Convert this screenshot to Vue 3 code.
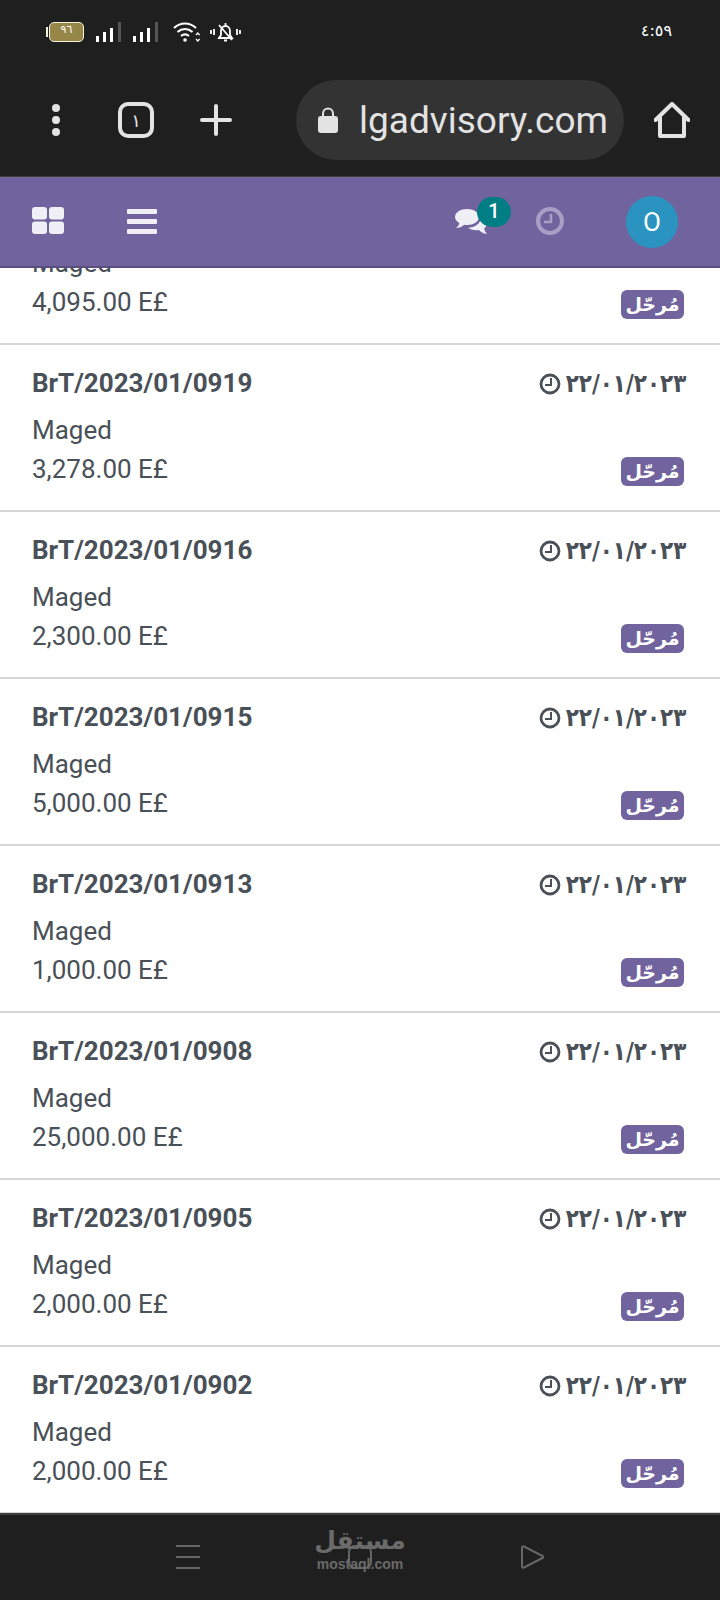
<template>
  <div class="phone">
    <header class="chrome">
      <div class="status">
        <div class="status-left">
          <span class="battery-nub"></span>
          <span class="battery"><span class="battery-num">٩٦</span></span>
          <svg class="signal" width="26" height="20" viewBox="0 0 26 20"><path d="M0 14h3v6H0zM7 10h3v10H7zM14 6h3v14h-3z" fill="#fff" /><path d="M22 0h3v20h-3z" fill="#555" /></svg>
          <svg class="signal" width="26" height="20" viewBox="0 0 26 20"><path d="M0 14h3v6H0zM7 10h3v10H7zM14 6h3v14h-3z" fill="#fff" /><path d="M22 0h3v20h-3z" fill="#555" /></svg>
          <svg class="wifi" width="27" height="21" viewBox="0 0 27 21" fill="none" stroke="#fff" stroke-width="2.2"><path d="M1 6c6.500-6 15.500-6 22 0" /><path d="M4.500 10c4.500-4 10.500-4 15 0" /><path d="M8 14c2.500-2 5.500-2 8 0" /><circle cx="12" cy="18" r="1.800" fill="#fff" stroke="none" /><path d="M23 13l1.800-2 1.800 2M23 17l1.800 2 1.800-2" stroke-width="1.300" /></svg>
          <svg class="bell" width="31" height="21" viewBox="0 0 31 21" fill="none" stroke="#fff" stroke-width="1.800"><path d="M9 16h13l-2-3V9c0-3-2-5-4.500-5S11 6 11 9v4z" /><path d="M14 18.500h3M15.500 1v3M9 3l13 15" /><path d="M1 8v4M4 7v6M27 7v6M30 8v4" /></svg>
        </div>
        <span class="time">٤:٥٩</span>
      </div>

      <div class="browser">
        <span class="dots"><i></i><i></i><i></i></span>
        <span class="tabs">١</span>
        <svg class="plus" width="32" height="32" viewBox="0 0 32 32"><path d="M16 2v28M2 16h28" stroke="#e3e3e3" stroke-width="4" stroke-linecap="round" /></svg>
        <div class="url">
          <svg width="20" height="26" viewBox="0 0 20 26"><path d="M5 10V6.500a5 5 0 0 1 10 0V10" fill="none" stroke="#e3e3e3" stroke-width="2" /><rect x="0" y="9" width="20" height="17" rx="3" fill="#e3e3e3" /></svg>
          <span class="url-text">lgadvisory.com</span>
        </div>
        <svg class="home" width="36" height="36" viewBox="0 0 36 36" fill="none" stroke="#e3e3e3" stroke-width="4" stroke-linejoin="round"><path d="M1.500 18L18 2l16.500 16" stroke-linecap="round" /><path d="M6 15v19h24V15" /></svg>
      </div>
    </header>

    <nav class="navbar">
      <svg class="apps" width="32" height="27" viewBox="0 0 32 27" fill="#f1eff6"><rect width="15" height="12.500" rx="3" /><rect x="17" width="15" height="12.500" rx="3" /><rect y="14.500" width="15" height="12.500" rx="3" /><rect x="17" y="14.500" width="15" height="12.500" rx="3" /></svg>
      <span class="bars"><i></i><i></i><i></i></span>
      <div class="nav-right">
        <span class="chat">
          <svg width="32" height="26" viewBox="0 0 32 26" fill="#f1eff6"><path d="M12 0c6.600 0 12 3.400 12 8s-5.400 8-12 8c-1 0-2 0-3-.3C7 18 4 19 1 19c2-1.500 3-3 3.300-5C1.600 12.500 0 10.400 0 8c0-4.600 5.400-8 12-8z" /><path d="M26 8c3.500 1 6 3.500 6 6.500 0 2-1 3.600-2.800 4.800.2 2 1.200 4 2.800 5.700-3.500-.3-6-2-8-4-1 .2-2 .3-3 .3-3 0-6-1-8-2.500 7 0 13-4.500 13-10.800z" /></svg>
          <span class="chat-count">1</span>
        </span>
        <svg class="activity" width="28" height="28" viewBox="0 0 28 28" fill="none" stroke="#a99fc6"><circle cx="14" cy="14" r="12" stroke-width="4" /><path d="M15 7v8H8" stroke-width="2.500" /></svg>
        <span class="avatar">O</span>
      </div>
    </nav>

    <main class="list">
      <!-- first row is scrolled under the navbar, only its lower part shows -->
      <article class="row row-cut">
        <div class="row-left">
          <div class="row-name">Maged</div>
          <div class="row-amount">4,095.00 E£</div>
        </div>
        <span class="badge">مُرحّل</span>
      </article>
      <article v-for="row in rows" :key="row.id" class="row">
        <div class="row-left">
          <div class="row-title">{{ row.id }}</div>
          <div class="row-name">Maged</div>
          <div class="row-amount">{{ row.amount }} E£</div>
        </div>
        <div class="row-right">
          <div class="row-date">
            <svg width="22" height="22" viewBox="0 0 22 22" fill="none" stroke="#495057"><circle cx="11" cy="11" r="9" stroke-width="2.800" /><path d="M12 5v7H6" stroke-width="2" /></svg>
            <span class="date-text">٢٢/٠١/٢٠٢٣</span>
          </div>
          <span class="badge">مُرحّل</span>
        </div>
      </article>
    </main>

    <footer class="softkeys">
      <svg width="24" height="24" viewBox="0 0 24 24" stroke="#666" stroke-width="2"><path d="M0 1h24M0 12h24M0 23h24" /></svg>
      <svg width="24" height="24" viewBox="0 0 24 24" fill="none" stroke="#666" stroke-width="2"><rect x="1" y="1" width="22" height="22" rx="6" /></svg>
      <svg width="24" height="24" viewBox="0 0 24 24" fill="none" stroke="#666" stroke-width="2" stroke-linejoin="round"><path d="M2 2.500c0-1 1-1.500 2-1L22.500 11c1 .5 1 1.500 0 2L4 22.500c-1 .5-2 0-2-1z" /></svg>
      <div class="watermark">
        <span class="wm-ar">مستقل</span>
        <span class="wm-en">mostaql.com</span>
      </div>
    </footer>
  </div>
</template>

<script setup>
const rows = [
  { id: 'BrT/2023/01/0919', amount: '3,278.00' },
  { id: 'BrT/2023/01/0916', amount: '2,300.00' },
  { id: 'BrT/2023/01/0915', amount: '5,000.00' },
  { id: 'BrT/2023/01/0913', amount: '1,000.00' },
  { id: 'BrT/2023/01/0908', amount: '25,000.00' },
  { id: 'BrT/2023/01/0905', amount: '2,000.00' },
  { id: 'BrT/2023/01/0902', amount: '2,000.00' }
]
</script>

<style>
html, body {
  margin: 0;
  background: #fff;
}
</style>

<style scoped>
.phone {
  width: 720px;
  height: 1600px;
  display: flex;
  flex-direction: column;
  overflow: hidden;
  font-family: Roboto, "DejaVu Sans", sans-serif;
}

.chrome {
  height: 176px;
  flex: none;
  background: #1f1f1f;
  border-bottom: 1px solid #3d3d3d;
}

.status {
  height: 80px;
  display: flex;
  justify-content: space-between;
  padding: 22px 48px 0 46px;
  box-sizing: border-box;
}
.status-left {
  display: flex;
  align-items: flex-start;
}
.battery-nub {
  width: 2px;
  height: 10px;
  margin: 5px 1px 0 0;
  background: #f4f0e0;
}
.battery {
  width: 35px;
  height: 20px;
  box-sizing: border-box;
  border: 1.5px solid #f4f0e0;
  border-radius: 5px;
  background: #968748;
  display: flex;
  justify-content: center;
  margin-right: 12px;
}
.battery-num {
  color: #fff;
  font-size: 11px;
  line-height: 14px;
  font-family: "DejaVu Sans", sans-serif;
}
.signal {
  margin-right: 11px;
}
.signal + .wifi {
  margin-left: 3px;
  margin-right: 10px;
}
.time {
  color: #fff;
  font-size: 16px;
  line-height: 18px;
  font-family: "DejaVu Sans", sans-serif;
  direction: ltr;
}

.browser {
  height: 80px;
  display: flex;
  align-items: center;
  padding-left: 52px;
}
.dots {
  width: 8px;
  display: flex;
  flex-direction: column;
  gap: 4px;
}
.dots i {
  width: 8px;
  height: 8px;
  border-radius: 50%;
  background: #e3e3e3;
}
.tabs {
  width: 36px;
  height: 36px;
  box-sizing: border-box;
  margin-left: 58px;
  border: 4px solid #e3e3e3;
  border-radius: 10px;
  color: #e3e3e3;
  font-size: 18px;
  display: flex;
  align-items: center;
  justify-content: center;
  font-family: "DejaVu Sans", sans-serif;
}
.plus {
  margin-left: 46px;
}
.url {
  width: 328px;
  height: 80px;
  margin-left: 64px;
  border-radius: 40px;
  background: #333;
  display: flex;
  align-items: center;
  padding-left: 22px;
  box-sizing: border-box;
}
.url-text {
  margin-left: 21px;
  color: #e3e3e3;
  font-size: 37px;
}
.home {
  margin-left: 30px;
}

.navbar {
  height: 91px;
  flex: none;
  box-sizing: border-box;
  background: #71639e;
  border-bottom: 2px solid #5b4f80;
  display: flex;
  align-items: center;
  padding: 0 42px 0 32px;
}
.apps {
  margin-top: -2px;
}
.bars {
  margin-left: 63px;
  width: 30px;
  display: flex;
  flex-direction: column;
  gap: 5px;
}
.bars i {
  height: 5px;
  border-radius: 1px;
  background: #f1eff6;
}
.nav-right {
  margin-left: auto;
  display: flex;
  align-items: center;
}
.chat {
  position: relative;
  display: flex;
  margin-right: 50px;
  left: 1px;
}
.chat-count {
  position: absolute;
  top: -12px;
  left: 22px;
  width: 34px;
  height: 30px;
  border-radius: 15px;
  background: #017e84;
  color: #fff;
  font-size: 20px;
  font-weight: 500;
  line-height: 28px;
  text-align: center;
}
.activity {
  margin-right: 62px;
  margin-top: -2px;
}
.avatar {
  width: 52px;
  height: 52px;
  border-radius: 50%;
  background: #2a93c0;
  color: #fff;
  font-size: 26px;
  line-height: 52px;
  text-align: center;
}

.list {
  flex: 1;
  min-height: 0;
  overflow: hidden;
  color: #495057;
  font-size: 26px;
  line-height: 39px;
}
.row {
  height: 167px;
  box-sizing: border-box;
  border-bottom: 2px solid #d6d6d6;
  padding: 19px 33px 0 32px;
  display: flex;
  justify-content: space-between;
}
.row-cut {
  height: 77px;
  padding-top: 0;
  padding-bottom: 21px;
  align-items: flex-end;
}
.row-cut .badge {
  margin: 0 3px 3px 0;
}
.row-title {
  font-weight: 700;
  margin-bottom: 8px;
}
.row-right {
  display: flex;
  flex-direction: column;
  align-items: flex-end;
}
.row-date {
  display: flex;
  align-items: center;
  gap: 7px;
  font-weight: 700;
  direction: ltr;
  font-family: "DejaVu Sans", sans-serif;
  font-size: 25px;
}
.date-text {
  display: inline-block;
  transform: scaleX(0.86);
  transform-origin: right center;
  margin-left: -22px;
  margin-right: 1px;
}
.badge {
  margin: 54px 3px 0 0;
  width: 63px;
  height: 29px;
  border-radius: 6px;
  background: #71639e;
  color: #fff;
  font-size: 19px;
  font-weight: 700;
  line-height: 28px;
  text-align: center;
  font-family: "DejaVu Sans", sans-serif;
}

.softkeys {
  height: 87px;
  flex: none;
  box-sizing: border-box;
  background: #1f1f1f;
  border-top: 2px solid #3d3d3d;
  display: flex;
  justify-content: space-between;
  padding: 30px 176px 0;
  position: relative;
  align-items: flex-start;
}
.watermark {
  position: absolute;
  top: 10px;
  left: 317px;
  width: 86px;
  display: flex;
  flex-direction: column;
  align-items: center;
  color: #6a6a6a;
  font-family: "DejaVu Sans", sans-serif;
  font-weight: 700;
}
.wm-ar {
  font-size: 25px;
  line-height: 32px;
}
.wm-en {
  font-family: "Liberation Sans", sans-serif;
  font-size: 14px;
  line-height: 14px;
}
</style>
